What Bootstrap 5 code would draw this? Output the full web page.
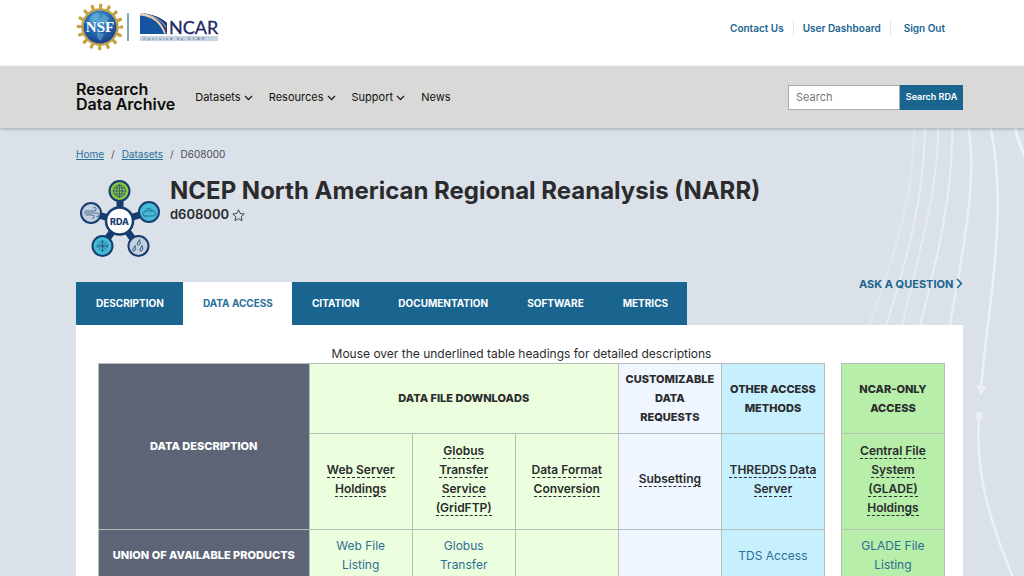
<!DOCTYPE html>
<html lang="en">
<head>
<meta charset="utf-8">
<meta name="viewport" content="width=device-width, initial-scale=1">
<title>NCEP North American Regional Reanalysis (NARR)</title>
<link href="https://cdn.jsdelivr.net/npm/bootstrap@5.3.0/dist/css/bootstrap.min.css" rel="stylesheet">
<style>
:root{--rda-blue:#1a658f;--rda-ink:#2b2b2d}
body{font-family:Inter,"Open Sans",sans-serif;font-size:12px;line-height:19px;color:var(--rda-ink)}
.page-pad{padding-left:76px;padding-right:61px}
.top-bar{height:66px}
.top-bar .nav{padding-right:18px}
.top-bar .nav-link{font-size:10px;line-height:16px;font-weight:600;color:var(--rda-blue)}
.vr-thin{width:1px;height:16px;background:#e4e8ea;margin:0 9px}
.main-bar{background:#d9d9d7;height:62px;box-shadow:0 1px 3px rgba(60,80,90,.4);z-index:2}
.site-name{font-size:16px;line-height:15px;font-weight:600;color:#0b0b0b}
.main-bar .nav-link{font-size:11px;line-height:18px;color:#111}
.site-search{width:175px}
.site-search .form-control{font-size:11px;line-height:18px;height:25px;border:1px solid #aaa;border-radius:0;padding:2px 7px}
.site-search .form-control::placeholder{color:#777}
.site-search .btn{font-size:9px;line-height:16px;font-weight:600;background:var(--rda-blue);color:#fff;border-radius:0;width:63px;height:25px;padding:0}
.hero{background:#dae1e8}
.curves{right:0;top:0}
.breadcrumb{font-size:10px;line-height:16px;padding-top:18px}
.breadcrumb-item{color:#4a4d50}
.breadcrumb a{color:#27709a}
.breadcrumb-item+.breadcrumb-item{padding-left:7px}
.breadcrumb-item+.breadcrumb-item::before{padding-right:7px;color:#555}
.dataset-title{font-size:24px;line-height:26px;font-weight:700}
.dataset-id{font-size:13px;line-height:20px;font-weight:600}
.tab-strip{margin-top:6px}
.tab-strip .nav-link{border-radius:0;background:var(--rda-blue);color:#fff;font-size:10px;line-height:17px;font-weight:700;height:43px;padding:13px 19px 13px 20px}
.tab-strip .nav-link.active{background:#fff;color:#27709a}
.ask-link{font-size:11px;line-height:16px;font-weight:700;color:var(--rda-blue)}
.ask-link svg{vertical-align:-1px}
.panel{background:#fff;padding:19px 18px 40px 22px}
.access-table{table-layout:fixed;border-collapse:collapse;text-align:center;width:100%}
.access-table th,.access-table td{border:1px solid #b6beb8;padding:6px 4px;vertical-align:middle}
.access-table th{font-size:11px;font-weight:800}
.access-table .sub-head th{font-size:12px;font-weight:600;padding-top:4px;padding-bottom:10px}
.access-table .spacer{border-top:0;border-bottom:0;background:#fff}
.access-table a{color:#306d94;text-decoration:none}
.term{border-bottom:1px dashed #2b2b2d}
.c-desc{background:#5c6475;color:#fff}
.c-file{background:#ebffdf}
.c-custom{background:#eff6ff}
.c-other{background:#c7f0ff}
.c-ncar{background:#b6eeaa}
.row-groups{height:70px}
.row-heads{height:96px}
.row-union{height:51px}
</style>
</head>
<body class="vh-100 overflow-hidden d-flex flex-column">
<header class="flex-shrink-0">
  <div class="top-bar page-pad d-flex justify-content-between bg-white">
    <a href="#" class="d-block" aria-label="NSF NCAR home">
      <svg width="146" height="54" viewBox="0 0 146 54">
        <defs><radialGradient id="globe" cx=".45" cy=".3" r=".75"><stop offset="0" stop-color="#55a9d8"/><stop offset=".5" stop-color="#2368ae"/><stop offset="1" stop-color="#183782"/></radialGradient></defs>
        <g stroke="#c4a345" fill="none">
          <circle cx="24" cy="27" r="17.500" stroke-width="2.500"/>
          <circle cx="24" cy="27" r="19.500" stroke-width="3.500" stroke-dasharray="3 4.658" stroke-dashoffset="1.500"/>
          <circle cx="24" cy="27" r="21.800" stroke-width="3.400" stroke-linecap="round" stroke-dasharray=".1 8.461"/>
        </g>
        <circle cx="24" cy="27" r="16.500" fill="url(#globe)"/>
        <path d="M16 15q5-4 8-1l-2 4-5 4-4-2zM27 14l6 4-2 5-5-2zM21 32l7 2-3 7-4-3z" fill="#8bc7df" opacity=".4"/>
        <text x="24" y="32" text-anchor="middle" font-family="Liberation Serif, serif" font-weight="700" font-size="15" fill="#fff">NSF</text>
        <path d="M52 13v28" stroke="#3c7695" stroke-width="1.300"/>
        <path d="M64 13C76 14 86 19 91 23V34H64z" fill="#1454a0"/>
        <path d="M64 13c13 2 23 9 27 21V23C82 15 73 14 64 13z" fill="#203c77"/>
        <path d="M64 14.500c13 1 21 8 25 19" fill="none" stroke="#f8cfa9" stroke-width="1.800"/>
        <path d="M64 13.400c13 1 23 8 26 14" fill="none" stroke="#fff" stroke-width=".7"/>
        <text x="93" y="34" font-family="Lato, sans-serif" font-size="18" fill="#1c2866" stroke="#1c2866" stroke-width=".3">NCAR</text>
        <path d="M64 36h78v5H64z" fill="#c6d3e3"/>
        <text x="67" y="40" font-family="Liberation Sans, sans-serif" font-size="4" letter-spacing="1.800" fill="#506780">Operated by UCAR</text>
      </svg>
    </a>
    <nav class="nav align-items-center align-self-start pt-3" aria-label="Account">
      <a class="nav-link py-1 px-0" href="#">Contact Us</a><span class="vr-thin"></span>
      <a class="nav-link py-1 px-0" href="#">User Dashboard</a><span class="vr-thin"></span>
      <a class="nav-link py-1 px-0 ms-1" href="#">Sign Out</a>
    </nav>
  </div>
  <div class="main-bar page-pad d-flex align-items-center position-relative">
    <a class="site-name text-decoration-none" href="#">Research<br>Data Archive</a>
    <nav class="nav ps-3 ms-1 me-auto" aria-label="Main">
      <a class="nav-link p-0 me-3" href="#">Datasets <svg width="9" height="6" viewBox="0 0 9 6"><path d="M1 1l3.500 3.500L8 1" fill="none" stroke="#222" stroke-width="1.300"/></svg></a>
      <a class="nav-link p-0 me-3" href="#">Resources <svg width="9" height="6" viewBox="0 0 9 6"><path d="M1 1l3.500 3.500L8 1" fill="none" stroke="#222" stroke-width="1.300"/></svg></a>
      <a class="nav-link p-0 me-3" href="#">Support <svg width="9" height="6" viewBox="0 0 9 6"><path d="M1 1l3.500 3.500L8 1" fill="none" stroke="#222" stroke-width="1.300"/></svg></a>
      <a class="nav-link p-0" href="#">News</a>
    </nav>
    <form class="site-search d-flex" role="search">
      <input class="form-control flex-grow-1" type="search" placeholder="Search" aria-label="Search">
      <button class="btn flex-shrink-0" type="button">Search RDA</button>
    </form>
  </div>
</header>
<main class="hero page-pad position-relative flex-grow-1 overflow-hidden">
  <svg class="curves position-absolute" width="164" height="448" viewBox="860 128 164 448" aria-hidden="true">
    <g fill="none" stroke="#fff" stroke-linecap="round">
      <g stroke-width="2"><path d="M914 126C914 190 900 240 869 326" opacity=".25"/>
      <path d="M925 126C924 200 908 255 886 326" opacity=".42"/>
      <path d="M938 126C940 180 920 250 902 326" opacity=".35"/>
      <path d="M952 126C954 190 937 260 920 326" opacity=".45"/></g>
      <path d="M968 126C978 180 963 250 949 330" stroke-width="2.500" opacity=".45"/>
      <path d="M990 126C1003 180 998 250 987 330L981 387" stroke-width="2.500" opacity=".55"/>
      <path d="M1015 126Q1017 140 1026 158" stroke-width="3" opacity=".6"/>
      <path d="M979 418C975 475 991 525 1014 580" stroke-width="2.500" opacity=".5"/>
    </g>
    <path d="M976 385l11 1-6 9z" fill="#ecf0f3"/><circle cx="979" cy="416" r="4" fill="#ecf0f3"/>
  </svg>
  <div class="position-relative">
    <nav aria-label="Breadcrumb"><ol class="breadcrumb mb-0">
      <li class="breadcrumb-item"><a href="#">Home</a></li><li class="breadcrumb-item"><a href="#">Datasets</a></li><li class="breadcrumb-item">D608000</li>
    </ol></nav>
    <div class="d-flex pt-3">
      <svg class="flex-shrink-0 me-2" width="86" height="82" viewBox="76 178 86 82" role="img" aria-label="RDA">
        <path d="M120 191V221L149 212M120 221L138 246M120 221L102 246M120 221L91 213" fill="none" stroke="#173d70" stroke-width="7"/>
        <circle cx="119.500" cy="221" r="13.500" fill="#fff" stroke="#173d70" stroke-width="2.500"/>
        <g stroke="#173d70" stroke-width="2"><circle cx="119.500" cy="191" r="10" fill="#8bc63f"/><circle cx="149" cy="212" r="10" fill="#45bcd5"/><circle cx="138.500" cy="246" r="10" fill="#c5d0df"/><circle cx="102.500" cy="246" r="10" fill="#45bcd5"/><circle cx="91" cy="213" r="10" fill="#c5d0df"/></g>
        <text x="119.500" y="224.500" text-anchor="middle" font-size="9" font-weight="800" fill="#173d70">RDA</text>
        <g fill="none" stroke="#1e4a78" stroke-width=".7" stroke-linecap="round">
          <circle cx="119.500" cy="191" r="6"/><ellipse cx="119.500" cy="191" rx="2.800" ry="6"/><path d="M119.500 185v12M113.500 191h12M114.500 188h10M114.500 194h10"/>
          <path d="M144 216h10q3-1 1-4-1-2-3-1-2-5-6-1l-1 2q-4 1-1 4M147 211q3-2 5 1"/>
          <path d="M85 211h9q3 0 2-3-2-2-3 0M84 213h13q3 0 2 3-2 2-3 0M86 215h6q3 0 2 3-2 1-2 0"/>
          <path d="M102.500 240v12M96.500 246h12M98.500 242l8 8M106.500 242l-8 8M101 241l1.500 2 1.500-2M101 251l1.500-2 1.500 2M97.500 244.500l2 1.500-2 1.500M107.500 244.500l-2 1.500 2 1.500"/>
          <path d="M139.500 240q-4 5-1 5 3-1 1-5zM135 246q-4 5-1 5 3-1 1-5zM142 246q-4 5-1 5 3-1 1-5z" stroke-width=".9"/>
        </g>
      </svg>
      <div>
        <h1 class="dataset-title mb-0">NCEP North American Regional Reanalysis (NARR)</h1>
        <div class="dataset-id">d608000 <svg width="13" height="13" viewBox="0 0 13 13" aria-hidden="true"><path d="M6.500.8l1.700 3.700 4 .5-3 2.700.8 4-3.500-2-3.500 2 .8-4-3-2.700 4-.5z" fill="none" stroke="#333" stroke-width=".9"/></svg></div>
      </div>
    </div>
    <div class="d-flex justify-content-between pt-3">
      <ul class="nav tab-strip flex-nowrap">
        <li class="nav-item"><a class="nav-link" href="#">DESCRIPTION</a></li>
        <li class="nav-item"><a class="nav-link active" aria-current="page" href="#">DATA ACCESS</a></li>
        <li class="nav-item"><a class="nav-link" href="#">CITATION</a></li>
        <li class="nav-item"><a class="nav-link" href="#">DOCUMENTATION</a></li>
        <li class="nav-item"><a class="nav-link" href="#">SOFTWARE</a></li>
        <li class="nav-item"><a class="nav-link" href="#">METRICS</a></li>
      </ul>
      <a class="ask-link text-decoration-none" href="#">ASK A QUESTION <svg width="7" height="11" viewBox="0 0 7 11"><path d="M1 1l4.500 4.500L1 10" fill="none" stroke="currentColor" stroke-width="1.500"/></svg></a>
    </div>
    <section class="panel">
      <div class="text-center">Mouse over the underlined table headings for detailed descriptions</div>
      <table class="access-table">
        <colgroup><col style="width:24.9%"><col><col><col><col><col><col style="width:2%"><col></colgroup>
        <thead>
          <tr class="row-groups"><th class="c-desc" rowspan="2">DATA DESCRIPTION</th><th class="c-file" colspan="3">DATA FILE DOWNLOADS</th><th class="c-custom">CUSTOMIZABLE<br>DATA<br>REQUESTS</th><th class="c-other">OTHER ACCESS METHODS</th><td class="spacer" rowspan="2"></td><th class="c-ncar">NCAR-ONLY ACCESS</th></tr>
          <tr class="row-heads sub-head"><th class="c-file"><span class="term">Web Server Holdings</span></th><th class="c-file"><span class="term">Globus<br>Transfer<br>Service<br>(GridFTP)</span></th><th class="c-file"><span class="term">Data Format Conversion</span></th><th class="c-custom"><span class="term">Subsetting</span></th><th class="c-other"><span class="term">THREDDS Data Server</span></th><th class="c-ncar"><span class="term">Central File System<br>(GLADE) Holdings</span></th></tr>
        </thead>
        <tbody>
          <tr class="row-union"><th class="c-desc">UNION OF AVAILABLE PRODUCTS</th><td class="c-file"><a href="#">Web File<br>Listing</a></td><td class="c-file"><a href="#">Globus<br>Transfer</a></td><td class="c-file"></td><td class="c-custom"></td><td class="c-other"><a href="#">TDS Access</a></td><td class="spacer"></td><td class="c-ncar"><a href="#">GLADE File<br>Listing</a></td></tr>
        </tbody>
      </table>
    </section>
  </div>
</main>
<script src="https://cdn.jsdelivr.net/npm/bootstrap@5.3.0/dist/js/bootstrap.bundle.min.js"></script>
</body>
</html>
